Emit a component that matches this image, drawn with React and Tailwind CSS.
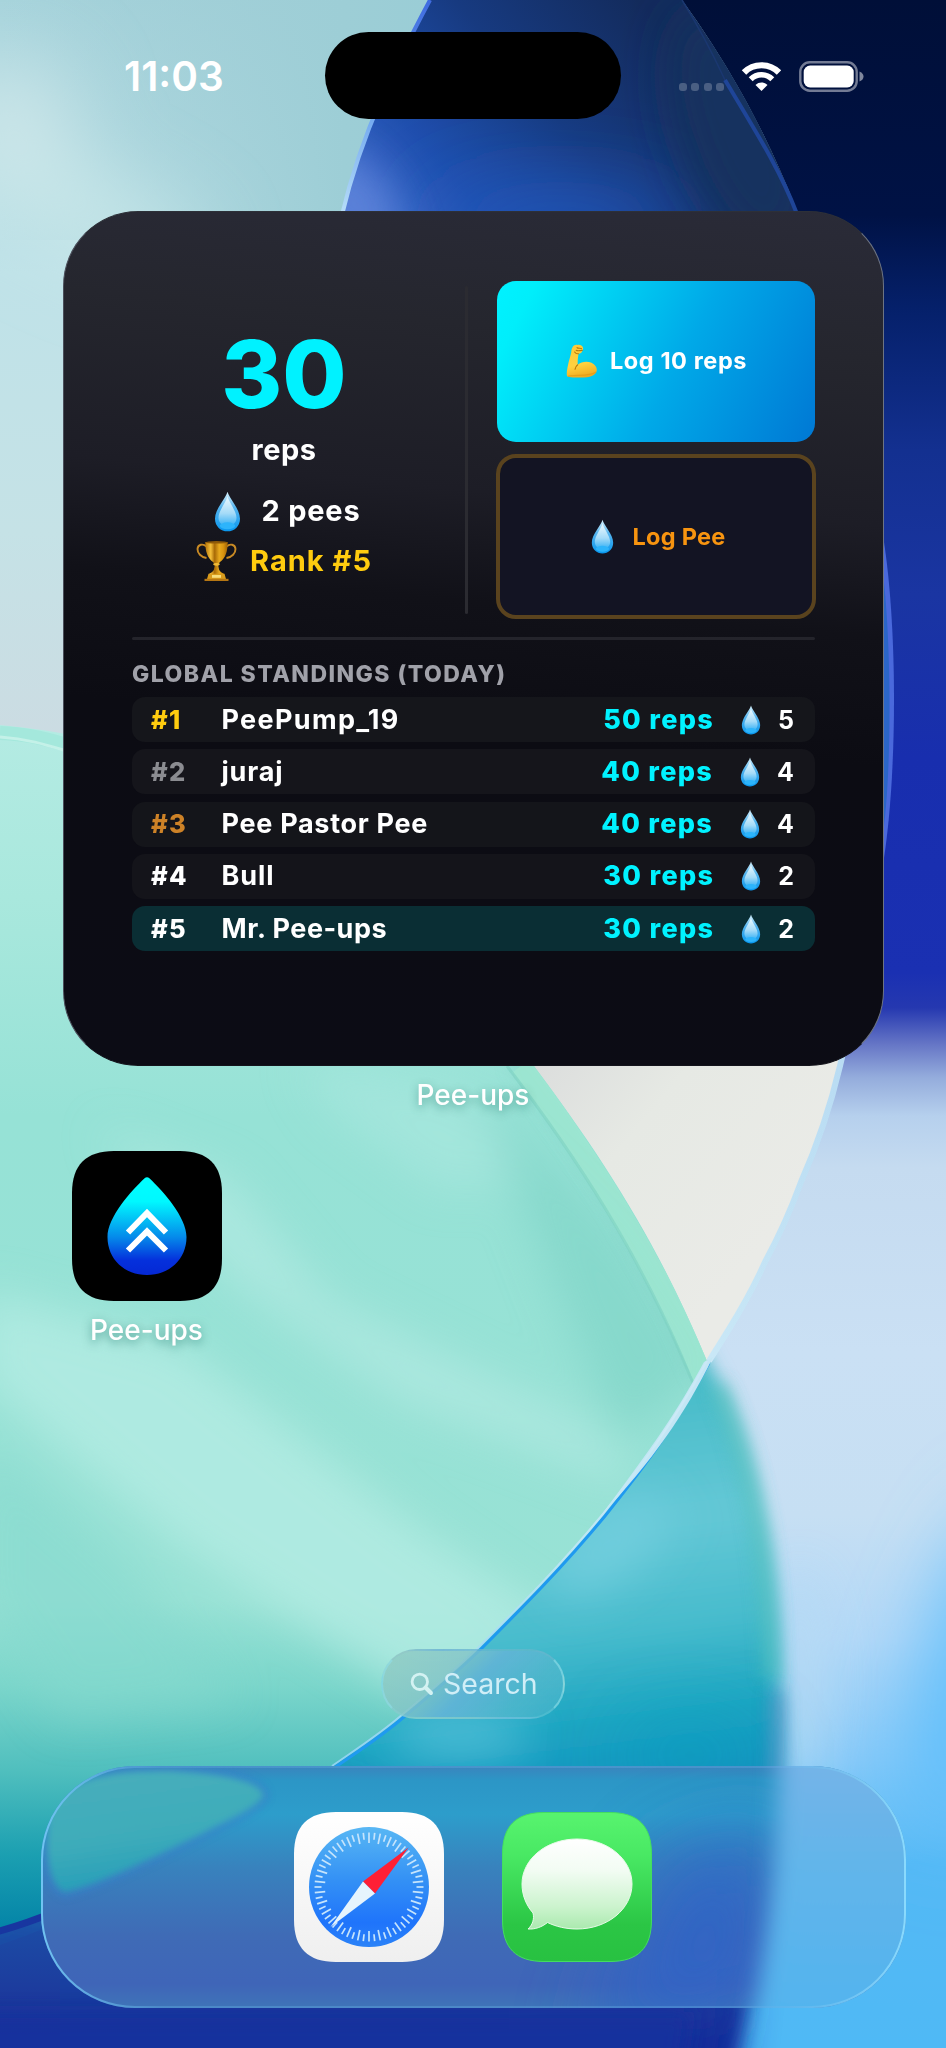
import React from "react";

const standings = [
  { rank: "#1", name: "PeePump_19", reps: "50 reps", pees: 5, rankClass: "text-[#ffcc0f]", nameClass: "tracking-[1.350px]", rowClass: "bg-[#15161b]" },
  { rank: "#2", name: "juraj", reps: "40 reps", pees: 4, rankClass: "text-[#8b8c91]", nameClass: "tracking-[0.800px]", rowClass: "bg-[#15151b]" },
  { rank: "#3", name: "Pee Pastor Pee", reps: "40 reps", pees: 4, rankClass: "text-[#cd8227]", nameClass: "tracking-[0.700px]", rowClass: "bg-[#14151a]" },
  { rank: "#4", name: "Bull", reps: "30 reps", pees: 2, rankClass: "text-white", nameClass: "tracking-[0.900px]", rowClass: "bg-[#14141a]" },
  { rank: "#5", name: "Mr. Pee-ups", reps: "30 reps", pees: 2, rankClass: "text-white", nameClass: "tracking-[0.500px]", rowClass: "bg-[#0a2e34]" },
];

function Wallpaper() {
  return (
    <svg className="absolute inset-0" width="946" height="2048" viewBox="0 0 946 2048" fill="none">
      <defs>
        <linearGradient id="sky" x1="0" y1="0" x2="0" y2="760" gradientUnits="userSpaceOnUse">
          <stop offset="0" stopColor="#a6d3db" />
          <stop offset=".36" stopColor="#bfe2e8" />
          <stop offset=".7" stopColor="#c5e2e6" />
          <stop offset="1" stopColor="#ccdbe2" />
        </linearGradient>
        <linearGradient id="skyRight" x1="0" y1="0" x2="430" y2="0" gradientUnits="userSpaceOnUse">
          <stop offset="0" stopColor="#9dcbd4" stopOpacity="0" />
          <stop offset=".8" stopColor="#9dced6" />
          <stop offset="1" stopColor="#9acdd6" />
        </linearGradient>
        <linearGradient id="right" x1="0" y1="0" x2="0" y2="2048" gradientUnits="userSpaceOnUse">
          <stop offset="0" stopColor="#000f38" />
          <stop offset=".105" stopColor="#001245" />
          <stop offset=".15" stopColor="#05206a" />
          <stop offset=".22" stopColor="#133090" />
          <stop offset=".29" stopColor="#1a35a2" />
          <stop offset=".37" stopColor="#182eae" />
          <stop offset=".475" stopColor="#1a30b2" />
          <stop offset=".492" stopColor="#2538b0" />
          <stop offset=".51" stopColor="#6676c6" />
          <stop offset=".526" stopColor="#94acdc" />
          <stop offset=".545" stopColor="#b6d0ed" />
          <stop offset=".57" stopColor="#c5dbf0" />
          <stop offset=".66" stopColor="#cae0f4" />
          <stop offset=".74" stopColor="#c6dff3" />
          <stop offset=".8" stopColor="#b3d8f7" />
          <stop offset=".86" stopColor="#86c9f8" />
          <stop offset=".91" stopColor="#54b9f5" />
          <stop offset="1" stopColor="#4fb9f5" />
        </linearGradient>
        <linearGradient id="lens" x1="360" y1="240" x2="640" y2="0" gradientUnits="userSpaceOnUse">
          <stop offset="0" stopColor="#4470d2" />
          <stop offset=".3" stopColor="#1f4fae" />
          <stop offset=".62" stopColor="#173a80" />
          <stop offset="1" stopColor="#132b5c" />
        </linearGradient>
        <linearGradient id="cream" x1="540" y1="1066" x2="760" y2="1250" gradientUnits="userSpaceOnUse">
          <stop offset="0" stopColor="#dcdedd" />
          <stop offset=".4" stopColor="#e6e9e4" />
          <stop offset="1" stopColor="#eaebe7" />
        </linearGradient>
        <linearGradient id="mint" x1="0" y1="728" x2="0" y2="1940" gradientUnits="userSpaceOnUse">
          <stop offset="0" stopColor="#b4ebe3" />
          <stop offset=".14" stopColor="#a9e8dd" />
          <stop offset=".32" stopColor="#96e2d6" />
          <stop offset=".72" stopColor="#98e2d5" />
          <stop offset=".79" stopColor="#7bd6cb" />
          <stop offset=".86" stopColor="#50bfbe" />
          <stop offset=".93" stopColor="#1b9fb1" />
          <stop offset="1" stopColor="#0080a6" />
        </linearGradient>
        <linearGradient id="teal" x1="560" y1="1400" x2="640" y2="2048" gradientUnits="userSpaceOnUse">
          <stop offset="0" stopColor="#48bcc9" />
          <stop offset=".2" stopColor="#64c8d6" />
          <stop offset=".36" stopColor="#48bccd" />
          <stop offset=".5" stopColor="#1ba5c2" />
          <stop offset=".62" stopColor="#1590c0" />
          <stop offset=".85" stopColor="#103ca6" />
          <stop offset="1" stopColor="#0c2c9a" />
        </linearGradient>
        <linearGradient id="deep" x1="0" y1="1920" x2="0" y2="2048" gradientUnits="userSpaceOnUse">
          <stop offset="0" stopColor="#1c4ea6" />
          <stop offset=".65" stopColor="#1c389c" />
          <stop offset="1" stopColor="#182c9a" />
        </linearGradient>
        <linearGradient id="rim" x1="838" y1="1066" x2="332" y2="1766" gradientUnits="userSpaceOnUse">
          <stop offset="0" stopColor="#b9dcf3" />
          <stop offset=".45" stopColor="#cdeaf7" />
          <stop offset=".62" stopColor="#bde6f4" />
          <stop offset="1" stopColor="#8ed2ee" />
        </linearGradient>
        <linearGradient id="lensRim" x1="0" y1="0" x2="0" y2="211" gradientUnits="userSpaceOnUse">
          <stop offset="0" stopColor="#3f6be0" />
          <stop offset=".5" stopColor="#6aa2ee" />
          <stop offset="1" stopColor="#b5dcf8" />
        </linearGradient>
        <filter id="b8" filterUnits="userSpaceOnUse" x="-200" y="-200" width="1350" height="2450"><feGaussianBlur stdDeviation="9" /></filter>
        <filter id="b20" filterUnits="userSpaceOnUse" x="-200" y="-200" width="1350" height="2450"><feGaussianBlur stdDeviation="22" /></filter>
        <filter id="b45" filterUnits="userSpaceOnUse" x="-200" y="-200" width="1350" height="2450"><feGaussianBlur stdDeviation="42" /></filter>
        <clipPath id="mintClip">
          <path d="M0 725C220 745 420 860 534 1066C603 1158 658 1243 707 1361C671 1427 640 1468 603 1514C560 1566 520 1606 478 1648C455 1670 432 1690 403 1714C380 1734 358 1748 332 1766C230 1840 110 1900 0 1930Z" />
        </clipPath>
        <clipPath id="glassClip">
          <path d="M946 900L880 900L838 1066C828 1108 815 1146 799 1182C788 1212 776 1238 763 1262C748 1296 728 1328 707 1361C671 1427 640 1468 603 1514C560 1566 520 1606 478 1648C455 1670 432 1690 403 1714C380 1734 358 1748 332 1766C230 1840 110 1900 0 1930V2048H946Z" />
        </clipPath>
        <clipPath id="lensClip">
          <path d="M430 0C398 60 362 130 342 215L342 500L860 500C850 400 830 300 797 211C762 120 718 50 682 0Z" />
        </clipPath>
      </defs>

      <rect width="946" height="2048" fill="url(#sky)" />
      <rect width="430" height="240" fill="url(#skyRight)" />
      <g filter="url(#b45)">
        <ellipse cx="10" cy="130" rx="60" ry="70" fill="#cde6e9" />
        <ellipse cx="90" cy="215" rx="120" ry="30" transform="rotate(24 90 215)" fill="#cdeaeb" />
      </g>

      <path d="M682 0H946V1060H860L797 211C762 120 718 50 682 0Z" fill="url(#right)" />
      <g clipPath="url(#lensClip)">
        <rect x="340" width="600" height="500" fill="url(#lens)" />
        <ellipse cx="560" cy="225" rx="130" ry="34" fill="#2358bd" filter="url(#b45)" />
        <ellipse cx="355" cy="205" rx="34" ry="60" transform="rotate(-35 355 205)" fill="#6388dc" opacity=".85" filter="url(#b20)" />
        <ellipse cx="740" cy="130" rx="60" ry="130" transform="rotate(-20 740 130)" fill="#14305f" filter="url(#b20)" />
      </g>
      <path d="M430 0C398 60 362 130 342 215" stroke="url(#lensRim)" strokeWidth="4" />
      <path d="M725 80C758 135 780 170 797 214" stroke="#1f4598" strokeWidth="4" />
      <path d="M682 0C697 24 712 52 725 80" stroke="#1a3770" strokeWidth="1.5" />
      <path d="M882 530C898 620 898 780 882 870Z" fill="#4a69dc" />
      <path d="M882 565C892 640 892 780 882 840Z" fill="#2b66c8" />

      <path d="M500 1040H846L838 1066C815 1160 765 1290 707 1361L534 1066Z" fill="url(#cream)" />

      <g clipPath="url(#glassClip)">
        <rect y="900" width="946" height="1148" fill="url(#right)" />
        <ellipse cx="975" cy="1680" rx="50" ry="170" transform="rotate(14 975 1680)" fill="#5abdfb" filter="url(#b45)" />
        <ellipse cx="800" cy="1680" rx="30" ry="110" fill="#b6daf4" opacity=".8" filter="url(#b20)" />
        <path d="M690 1330C735 1400 772 1500 778 1640C783 1780 770 1920 728 2090H-60V1800L400 1600Z" fill="url(#teal)" filter="url(#b8)" />
        <path d="M718 1385C758 1480 770 1580 772 1680" stroke="#4fbfba" strokeWidth="14" opacity=".8" filter="url(#b8)" />
        <path d="M777 1690C780 1800 768 1900 740 2000" stroke="#4285b8" strokeWidth="12" opacity=".8" filter="url(#b8)" />
        <path d="M-60 1880L60 1905L200 1850L340 1790L560 1950L740 1980L725 2100H-60Z" fill="url(#deep)" filter="url(#b20)" opacity=".85" />
        <ellipse cx="610" cy="1545" rx="70" ry="32" transform="rotate(-35 610 1545)" fill="#6fcddd" filter="url(#b20)" />
        <ellipse cx="690" cy="1755" rx="70" ry="22" fill="#109fbe" opacity=".8" filter="url(#b45)" />
        <ellipse cx="460" cy="1735" rx="70" ry="20" fill="#53bfd8" filter="url(#b20)" />
        <path d="M0 1945C20 1938 40 1930 60 1922L60 2048H0Z" fill="url(#deep)" />
        <path d="M-30 2012H690L680 2078H-30Z" fill="#15309e" filter="url(#b8)" opacity=".8" />
      </g>

      <g clipPath="url(#mintClip)">
        <rect y="700" width="760" height="1240" fill="url(#mint)" />
        <g filter="url(#b20)">
          <path d="M-20 1290L180 1345L420 1530L600 1650L420 1700L180 1545L-20 1380Z" fill="#b4ece3" opacity=".8" />
          <path d="M100 1130L230 1180L330 1300L600 1430L640 1490L400 1400L230 1280Z" fill="#aee9e1" opacity=".85" />
          <path d="M300 1060L460 1090L540 1180L440 1190L330 1110Z" fill="#a8e7de" opacity=".7" />
          <path d="M480 1090L620 1230L710 1370L620 1440L560 1300Z" fill="#82d6c9" opacity=".8" />
          <path d="M-20 1440L120 1560L240 1700L60 1720L-20 1600Z" fill="#86d9ce" opacity=".6" />
        </g>
        <path d="M514 1060C592 1164 648 1250 698 1368L712 1400" stroke="#77cdbd" strokeWidth="5" filter="url(#b8)" />
        <path d="M521 1066C590 1160 646 1246 699 1366L715 1405" stroke="#9ce5d0" strokeWidth="22" opacity=".9" />
        <path d="M507 1066C577 1158 640 1254 690 1376L705 1410" stroke="#7dd0c1" strokeWidth="3" opacity=".6" />
        <path d="M0 733C30 734 50 740 70 746" stroke="#a4e8dc" strokeWidth="14" />
        <path d="M0 737C30 739 50 746 70 752" stroke="#c4f1e8" strokeWidth="3" />
      </g>

      <path d="M707 1361C671 1427 640 1468 603 1514C560 1566 520 1606 478 1648C455 1670 432 1690 403 1714C380 1734 358 1748 332 1766" transform="translate(2 2)" stroke="#1f9af0" strokeWidth="3" />
      <path d="M845 1036L838 1066C828 1108 815 1146 799 1182C788 1212 776 1238 763 1262C748 1296 728 1328 707 1361" transform="translate(2 0)" stroke="url(#rim)" strokeWidth="6" />
      <path d="M704 1362C676 1414 650 1450 600 1517C653 1460 684 1416 713 1357Z" fill="#c3e6f4" />
      <path d="M707 1361C671 1427 640 1468 603 1514C560 1566 520 1606 478 1648C455 1670 432 1690 403 1714C380 1734 358 1748 332 1766" stroke="url(#rim)" strokeWidth="2" />
      <path d="M-4 1932C15 1927 35 1920 60 1910" stroke="#1836a0" strokeWidth="7" />
    </svg>
  );
}

function Drop({ className }) {
  return (
    <svg className={className} viewBox="0 0 40 40" fill="none">
      <defs>
        <linearGradient id="dropFill" x1="20" y1="1" x2="20" y2="39" gradientUnits="userSpaceOnUse">
          <stop offset="0" stopColor="#d8f2fd" />
          <stop offset=".4" stopColor="#55b4ee" />
          <stop offset="1" stopColor="#0a97ee" />
        </linearGradient>
        <linearGradient id="dropGlow" x1="20" y1="5" x2="20" y2="33" gradientUnits="userSpaceOnUse">
          <stop offset="0" stopColor="#eefaff" />
          <stop offset=".6" stopColor="#a5dbf8" />
          <stop offset="1" stopColor="#3fb4f5" />
        </linearGradient>
      </defs>
      <path d="M20 .8C21.5 7 32.200 17.500 32.200 27C32.200 34.500 26.500 39.300 20 39.300C13.500 39.300 7.800 34.500 7.800 27C7.800 17.500 18.500 7 20 .8Z" fill="url(#dropFill)" />
      <path d="M20 5C21.500 11 28.800 19.500 28.800 26C28.800 31 25 34 20 34C15 34 11.200 31 11.200 26C11.200 19.500 18.500 11 20 5Z" fill="url(#dropGlow)" />
      <ellipse cx="20" cy="34" rx="7.500" ry="3.400" fill="#2db4fb" />
    </svg>
  );
}

function Trophy({ className }) {
  return (
    <svg className={className} viewBox="0 0 41 41" fill="none">
      <defs>
        <linearGradient id="gold" x1="9" y1="0" x2="32" y2="0" gradientUnits="userSpaceOnUse">
          <stop offset="0" stopColor="#b06f05" />
          <stop offset=".25" stopColor="#f4bf3a" />
          <stop offset=".42" stopColor="#a86a06" />
          <stop offset=".62" stopColor="#e7a91e" />
          <stop offset=".8" stopColor="#d8930f" />
          <stop offset="1" stopColor="#9a5e04" />
        </linearGradient>
      </defs>
      <path d="M10.500 6C7 2.800 1.800 3.800 1.500 8.500C1.400 12.800 5 16.500 10.500 17.500M30.500 6C34 2.800 39.200 3.800 39.500 8.500C39.600 12.800 36 16.500 30.500 17.500" stroke="#c88a24" strokeWidth="1.900" />
      <path d="M9.300 1.500H31.700C31.700 11 29.500 17.500 24 21.500C22.500 22.600 22.300 24 22.300 25.500L23.200 29.500C24 31.500 27 32.500 28 33.500H13C14 32.500 17 31.500 17.800 29.500L18.700 25.500C18.700 24 18.500 22.600 17 21.500C11.500 17.500 9.300 11 9.300 1.500Z" fill="url(#gold)" />
      <ellipse cx="20.500" cy="1.800" rx="11.200" ry="1.200" fill="#8f5a08" />
      <ellipse cx="20.500" cy="23.800" rx="3.300" ry="1.400" fill="#f0bb37" />
      <path d="M12.500 33.200H28.500L30 38.500H11Z" fill="#d99c1c" />
      <path d="M16 34.500H25V37.300H16Z" fill="#f7dd7c" />
      <path d="M8.500 38.300H32.500V40.500H8.500Z" fill="#b57613" />
    </svg>
  );
}

function Biceps({ className }) {
  return (
    <svg className={className} viewBox="0 0 31 34" fill="none">
      <defs>
        <linearGradient id="skin" x1="10" y1="0" x2="18" y2="34" gradientUnits="userSpaceOnUse">
          <stop offset="0" stopColor="#fdc936" />
          <stop offset=".6" stopColor="#ffd13f" />
          <stop offset="1" stopColor="#efa71c" />
        </linearGradient>
      </defs>
      <path d="M6.300 3.800C7 1.500 9.500 .3 11.500 .9C13.500 .4 16.500 1.300 16.800 3.200C17.500 4.500 17 5.600 16.300 6.300C16.500 8.200 14.800 9.800 12.500 9.800C12.200 12.500 11.500 15.500 11.700 20.800C15 17.600 21 16.800 25.500 18.700C29.500 20.500 31.300 24 30.700 27C29.800 31.300 24 33.600 15 33.600C9 33.600 3 33.500 1.500 32.600C.4 31.500 .6 28 1.700 22.500C3 16 4.500 12 5.200 8.500C5.300 6.800 5.600 5 6.300 3.800Z" fill="url(#skin)" />
      <path d="M11.700 20.800C10.200 22 9.300 23.500 9 25.300M11 3.600C12 5 14.500 3.800 15.500 4.600M10.200 6.300C11.800 7.300 14.200 6.400 16.200 6.400M12.500 9.700C11 9.900 9.400 9.200 8.600 8" stroke="#b87708" strokeWidth="1.100" strokeLinecap="round" />
      <path d="M2 32.300C9 30.500 24 33 30 28" stroke="#dc9212" strokeWidth="1.200" opacity=".6" />
    </svg>
  );
}

function StatusBar() {
  return (
    <header className="relative flex h-[211px] items-start justify-between pl-[124px] pr-[82px] pt-[32px]">
      <span className="mt-[23px] w-[109px] whitespace-nowrap text-[40.500px] font-semibold leading-[44px] tracking-[0px] text-white">11:03</span>
      <div className="ml-[92px] h-[87px] w-[296px] rounded-full bg-black" />
      <div className="ml-auto mt-[28.500px] flex items-end">
        <div className="mb-[1px] flex gap-[4.500px]">
          <i className="h-2 w-2 rounded-[3px] bg-[#4a5f83]" />
          <i className="h-2 w-2 rounded-[3px] bg-[#4a5f83]" />
          <i className="h-2 w-2 rounded-[3px] bg-[#4a5f83]" />
          <i className="h-2 w-2 rounded-[3px] bg-[#4a5f83]" />
        </div>
        <svg className="ml-[17px]" width="41" height="31" viewBox="0 0 41 31" fill="none">
          <path d="M3 11.500C12.500 1.800 28.500 1.800 38 11.500" stroke="white" strokeWidth="6.200" />
          <path d="M9.700 18.300C15.700 12.300 25.300 12.300 31.300 18.300" stroke="white" strokeWidth="5.600" />
          <path d="M20.500 30L14.500 24C17.800 20.700 23.200 20.700 26.500 24Z" fill="white" />
        </svg>
        <svg className="ml-[17px]" width="65" height="31" viewBox="0 0 65 31" fill="none">
          <rect x="1.300" y="1.300" width="56.400" height="28.400" rx="9.500" stroke="white" strokeOpacity=".45" strokeWidth="2.400" />
          <rect x="4.700" y="4.500" width="50" height="22" rx="6.500" fill="white" />
          <path d="M60.500 10.500C63.200 11.500 64.500 13.500 64.500 15.500C64.500 17.500 63.200 19.500 60.500 20.500Z" fill="white" fillOpacity=".5" />
        </svg>
      </div>
    </header>
  );
}

function Summary() {
  return (
    <section className="flex h-[338px]">
      <div className="flex w-[304px] flex-col items-center pt-[48px]">
        <strong className="text-[93px] font-extrabold leading-[90px] tracking-[0px] text-[#00f2ff]">30</strong>
        <span className="mt-[11px] text-[29px] font-bold leading-[40px] tracking-[0.500px] text-white">reps</span>
        <div className="mt-[20px] flex items-center gap-[13px]">
          <Drop className="h-[41px] w-[41px]" />
          <span className="whitespace-nowrap text-[29px] font-bold leading-[42px] tracking-[0.800px] text-white">2 pees</span>
        </div>
        <div className="mt-[8px] flex items-center gap-[13px]">
          <Trophy className="h-[42px] w-[41px]" />
          <span className="whitespace-nowrap text-[29px] font-bold leading-[42px] tracking-[1px] text-[#ffcc0f]">Rank #5</span>
        </div>
      </div>
      <div className="ml-[29px] mt-[5px] h-[328px] w-[3px] rounded-full bg-[#2b2b31]" />
      <div className="ml-[28.500px] flex w-[318px] flex-col">
        <button className="flex h-[161px] items-center justify-center gap-[12px] rounded-[19px] bg-[linear-gradient(117deg,#00f2ff_0%,#00eefb_10%,#00a9e8_56%,#0078d4_100%)]">
          <Biceps className="ml-[1px] h-[34px] w-[33px]" />
          <span className="whitespace-nowrap text-[23.500px] font-bold leading-[30px] tracking-[0.600px] text-white">Log 10 reps</span>
        </button>
        <button className="-mx-px mt-[12.500px] flex h-[165px] items-center justify-center gap-[12px] rounded-[20px] border-4 border-[#5a431e] bg-[#131423]">
          <Drop className="h-[35px] w-[35px]" />
          <span className="whitespace-nowrap text-[23.500px] font-bold leading-[30px] tracking-[0.300px] text-[#f79410]">Log Pee</span>
        </button>
      </div>
    </section>
  );
}

function Widget() {
  return (
    <main className="relative ml-[63px] flex h-[855px] w-[821px] flex-col rounded-[75px] border border-[#6d7482] border-b-[#14141c] border-l-[#4b4f5b] border-t-[#2d3038] bg-[linear-gradient(185deg,#2a2b38_0%,#25262e_16%,#1d1d26_34%,#111118_46%,#0c0c13_60%,#0c0c15_100%)] px-[68px] pt-[69px]">
      <Summary />
      <div className="mt-[18px] h-[3px] rounded-full bg-[#24242b]" />
      <h2 className="mt-[19px] whitespace-nowrap text-[23px] font-extrabold leading-[30px] tracking-[1.450px] text-[#a0a1a9]">GLOBAL STANDINGS (TODAY)</h2>
      <ul className="mt-[8px] flex flex-col gap-[7.300px]">
        {standings.map((row) => (
          <li key={row.rank} className={"flex h-[45px] items-center rounded-[13px] pl-[19px] pr-[21px] " + row.rowClass}>
            <span className={"w-[70.500px] text-[25.500px] font-extrabold leading-[30px] tracking-[1.200px] " + row.rankClass}>{row.rank}</span>
            <span className={"whitespace-nowrap text-[27px] font-bold leading-[32px] text-white " + row.nameClass}>{row.name}</span>
            <span className="ml-auto whitespace-nowrap text-[27px] font-extrabold leading-[32px] tracking-[1.300px] text-[#00f2ff]">{row.reps}</span>
            <Drop className="ml-[22px] h-[30px] w-[30px]" />
            <span className="ml-[12px] text-[25px] font-bold leading-[30px] text-white">{row.pees}</span>
          </li>
        ))}
      </ul>
    </main>
  );
}

function AppIcon() {
  return (
    <svg width="150" height="150" viewBox="0 0 150 150" fill="none">
      <defs>
        <linearGradient id="appDrop" x1="75" y1="26" x2="75" y2="124" gradientUnits="userSpaceOnUse">
          <stop offset="0" stopColor="#00ffff" />
          <stop offset=".25" stopColor="#00f8ff" />
          <stop offset=".62" stopColor="#0588ea" />
          <stop offset=".85" stopColor="#0530dc" />
          <stop offset="1" stopColor="#0528d4" />
        </linearGradient>
      </defs>
      <path d="M42 0H108C136 0 150 14 150 42V108C150 136 136 150 108 150H42C14 150 0 136 0 108V42C0 14 14 0 42 0Z" fill="#000" />
      <path d="M72.600 27.200C74 25.800 76 25.800 77.400 27.200C91 40 114.500 66 114.500 86C114.500 108.500 97 124 75 124C53 124 35.500 108.500 35.500 86C35.500 66 59 40 72.600 27.200Z" fill="url(#appDrop)" />
      <path d="M56 81.500L75 62L94 81.500M56 99.500L75 80.500L94 99.500" stroke="white" strokeWidth="6" />
    </svg>
  );
}

function SafariIcon() {
  const ticks = Array.from({ length: 60 }, (_, i) => i);
  return (
    <svg width="150" height="150" viewBox="0 0 150 150" fill="none">
      <defs>
        <linearGradient id="safariBg" x1="75" y1="0" x2="75" y2="150" gradientUnits="userSpaceOnUse">
          <stop offset="0" stopColor="#ffffff" />
          <stop offset="1" stopColor="#efefef" />
        </linearGradient>
        <linearGradient id="safariDial" x1="75" y1="15" x2="75" y2="135" gradientUnits="userSpaceOnUse">
          <stop offset="0" stopColor="#58b7f4" />
          <stop offset=".45" stopColor="#3390f5" />
          <stop offset=".8" stopColor="#1f74fb" />
          <stop offset="1" stopColor="#2b83f8" />
        </linearGradient>
      </defs>
      <path d="M42 0H108C136 0 150 14 150 42V108C150 136 136 150 108 150H42C14 150 0 136 0 108V42C0 14 14 0 42 0Z" fill="url(#safariBg)" />
      <circle cx="75" cy="75" r="60" fill="url(#safariDial)" />
      {ticks.map((i) => (
        <path key={i} d={i % 2 ? "M75 20.500V27.500" : "M75 20.500V31"} transform={`rotate(${i * 6} 75 75)`} stroke="#c5e4fc" strokeWidth="1.700" />
      ))}
      <path d="M114.500 35.500L69 69.500L81 81.500Z" fill="#ff1f35" />
      <path d="M36.500 115L69 69.500L81 81.500Z" fill="#e6f4fd" />
    </svg>
  );
}

function MessagesIcon() {
  return (
    <svg width="150" height="150" viewBox="0 0 150 150" fill="none">
      <defs>
        <linearGradient id="msgBg" x1="75" y1="0" x2="75" y2="150" gradientUnits="userSpaceOnUse">
          <stop offset="0" stopColor="#58f46f" />
          <stop offset=".3" stopColor="#48e863" />
          <stop offset=".75" stopColor="#2bc645" />
          <stop offset="1" stopColor="#28c141" />
        </linearGradient>
        <linearGradient id="bubble" x1="75" y1="27" x2="75" y2="118" gradientUnits="userSpaceOnUse">
          <stop offset="0" stopColor="#ffffff" />
          <stop offset=".35" stopColor="#f2fcf3" />
          <stop offset=".75" stopColor="#cbf3cd" />
          <stop offset="1" stopColor="#a9e9ad" />
        </linearGradient>
      </defs>
      <path d="M42 .5H108C136 .5 149.500 14 149.500 42V108C149.500 136 136 149.500 108 149.500H42C14 149.500 .5 136 .5 108V42C.5 14 14 .5 42 .5Z" fill="url(#msgBg)" stroke="#45dd5f" />
      <path d="M75 27C105.500 27 130 47 130 72C130 97 105.500 117 75 117C64 117 54 114.600 45.500 110.500C40 115 33 117.500 26 117C30.500 113 32.500 107 31 101C24 93 20 83 20 72C20 47 44.500 27 75 27Z" fill="url(#bubble)" stroke="#e9fbea" strokeWidth="1" />
    </svg>
  );
}

function Dock() {
  return (
    <footer className="relative ml-[41px] mt-[47px] flex h-[242px] w-[865px] justify-center gap-[57.500px] pr-[1.500px] pt-[46px]">
      <svg className="absolute inset-0" width="865" height="242" viewBox="0 0 865 242" fill="none">
        <defs>
          <linearGradient id="dockBase" x1="400" y1="0" x2="400" y2="242" gradientUnits="userSpaceOnUse">
            <stop offset="0" stopColor="#3a84bd" />
            <stop offset=".06" stopColor="#2c96c6" />
            <stop offset=".2" stopColor="#2d9dcb" />
            <stop offset=".42" stopColor="#3882bd" />
            <stop offset=".7" stopColor="#3f6bb6" />
            <stop offset=".9" stopColor="#3f65b8" />
            <stop offset="1" stopColor="#3f74b8" />
          </linearGradient>
          <linearGradient id="dockRight" x1="800" y1="0" x2="800" y2="242" gradientUnits="userSpaceOnUse">
            <stop offset="0" stopColor="#74b4e8" />
            <stop offset=".4" stopColor="#62b5ea" />
            <stop offset="1" stopColor="#53b4ee" />
          </linearGradient>
          <linearGradient id="dockBlob" x1="80" y1="0" x2="100" y2="140" gradientUnits="userSpaceOnUse">
            <stop offset="0" stopColor="#48aebb" />
            <stop offset=".5" stopColor="#3eacba" />
            <stop offset="1" stopColor="#1c98b8" />
          </linearGradient>
          <linearGradient id="dockRim" x1="0" y1="0" x2="865" y2="0" gradientUnits="userSpaceOnUse">
            <stop offset="0" stopColor="#70c4f2" />
            <stop offset=".14" stopColor="#5fa9e0" stopOpacity=".4" />
            <stop offset=".85" stopColor="#6cb5ea" stopOpacity=".3" />
            <stop offset="1" stopColor="#8adafd" />
          </linearGradient>
          <filter id="soft3" filterUnits="userSpaceOnUse" x="-50" y="-50" width="965" height="342"><feGaussianBlur stdDeviation="3" /></filter>
          <filter id="soft12" filterUnits="userSpaceOnUse" x="-50" y="-100" width="1000" height="442"><feGaussianBlur stdDeviation="11" /></filter>
          <filter id="soft35" filterUnits="userSpaceOnUse" x="-100" y="-150" width="1100" height="542"><feGaussianBlur stdDeviation="40" /></filter>
          <clipPath id="dockClip"><rect width="865" height="242" rx="94" /></clipPath>
        </defs>
        <g clipPath="url(#dockClip)">
          <rect width="865" height="242" fill="url(#dockBase)" />
          <path d="M620 90L740 60L730 242L540 290L590 180Z" fill="#2f64c8" filter="url(#soft35)" opacity=".8" />
          <path d="M738 -40C738 60 735 130 705 290H920V-40Z" fill="url(#dockRight)" filter="url(#soft12)" />
          <path d="M8 50C20 15 60 4 130 5C190 8 222 18 222 30C215 42 190 52 160 68C110 92 60 118 24 126C8 120 4 90 8 50Z" stroke="#3b7fca" strokeWidth="14" opacity=".45" filter="url(#soft3)" />
          <path d="M8 50C20 15 60 4 130 5C190 8 222 18 222 30C215 42 190 52 160 68C110 92 60 118 24 126C8 120 4 90 8 50Z" fill="url(#dockBlob)" filter="url(#soft3)" />
        </g>
        <rect x="1" y="1" width="863" height="240" rx="93" stroke="url(#dockRim)" strokeWidth="2" />
      </svg>
      <div className="relative"><SafariIcon /></div>
      <div className="relative"><MessagesIcon /></div>
    </footer>
  );
}

export default function App() {
  return (
    <div className="relative h-[2048px] w-[946px] overflow-hidden bg-[#98e2d5] font-['Inter','Liberation_Sans',sans-serif]">
      <Wallpaper />
      <StatusBar />
      <Widget />
      <p className="relative mt-[13px] text-center text-[28px] font-medium leading-[32px] text-white [text-shadow:0_3px_10px_rgba(0,90,80,0.45)]">Pee-ups</p>
      <section className="relative ml-[71.500px] mt-[40px] flex w-[150px] flex-col items-center">
        <AppIcon />
        <span className="mt-[13px] whitespace-nowrap text-[28px] font-medium leading-[32px] text-white [text-shadow:0_3px_10px_rgba(0,90,80,0.5)]">Pee-ups</span>
      </section>
      <div className="relative mx-auto mt-[303px] flex h-[70px] w-[184px] items-center rounded-full border-2 border-[#8fe0ea]/60 border-b-[#8fe0ea]/20 border-t-[#8fb8c8]/20 bg-[linear-gradient(135deg,rgba(145,203,193,0.8)_0%,rgba(130,195,198,0.8)_35%,rgba(100,180,215,0.85)_50%,rgba(90,185,205,0.6)_75%,rgba(90,185,205,0.4)_100%)] pl-[27px]">
        <svg width="24" height="24" viewBox="0 0 24 24" fill="none">
          <circle cx="9.800" cy="9.800" r="7.700" stroke="#d3f2f2" strokeWidth="2.800" />
          <path d="M15.500 15.500L21 21" stroke="#d3f2f2" strokeWidth="4" strokeLinecap="round" />
        </svg>
        <span className="ml-[9px] text-[28.500px] font-normal leading-[32px] text-[#d0eef7]">Search</span>
      </div>
      <Dock />
    </div>
  );
}
